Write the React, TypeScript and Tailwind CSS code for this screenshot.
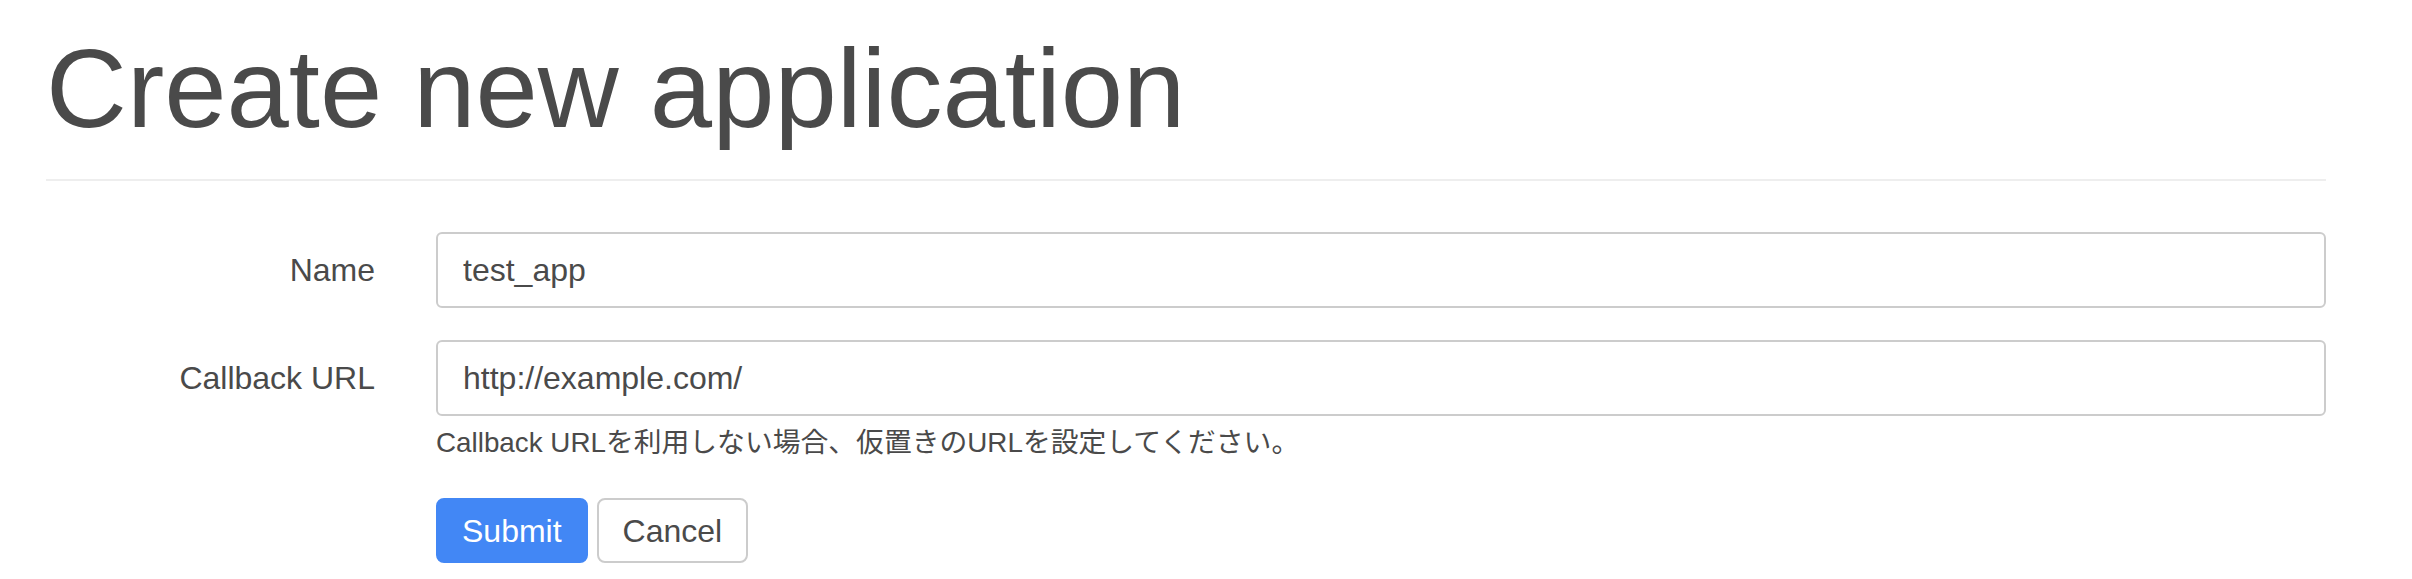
import React from 'react';

const fieldClass =
  "h-[76px] w-full rounded-[6px] border-2 border-[#cccccc] bg-white px-[25px] text-[32px] text-[#4a4a4a] outline-none";

export default function App() {
  return (
    <div className="min-h-screen bg-white pl-[46px] pr-[86px] pt-[22px] font-['Liberation_Sans','Noto_Sans_CJK_JP',sans-serif] text-[#4a4a4a]">
      {/* Page header */}
      <div className="border-b-2 border-[#eeeeee] pb-[23px]">
        <h1 className="text-[112px] leading-[1.2] font-normal text-[#4a4a4a]">Create new application</h1>
      </div>

      <form className="mt-[51px] flex flex-col" onSubmit={(e) => e.preventDefault()}>
        <div className="flex items-center gap-[61px]">
          <label className="w-[329px] shrink-0 text-right text-[32px]">Name</label>
          <input className={fieldClass} defaultValue="test_app" />
        </div>

        <div className="mt-[32px] flex items-center gap-[61px]">
          <label className="w-[329px] shrink-0 text-right text-[32px]">Callback URL</label>
          <input className={fieldClass} defaultValue="http://example.com/" />
        </div>

        <div className="ml-[390px] flex flex-col">
          <p className="mt-[6px] text-[27.8px] leading-[42px]">
            Callback URLを利用しない場合、仮置きのURLを設定してください。
          </p>
          <div className="mt-[34px] flex gap-[9px]">
            <button
              type="submit"
              className="flex h-[65px] items-center rounded-[8px] border-2 border-[#4287f5] bg-[#4287f5] px-[24px] text-[32px] text-white"
            >
              Submit
            </button>
            <button
              type="button"
              className="flex h-[65px] items-center rounded-[8px] border-2 border-[#cccccc] bg-white px-[24px] text-[32px] text-[#4a4a4a]"
            >
              Cancel
            </button>
          </div>
        </div>
      </form>
    </div>
  );
}
